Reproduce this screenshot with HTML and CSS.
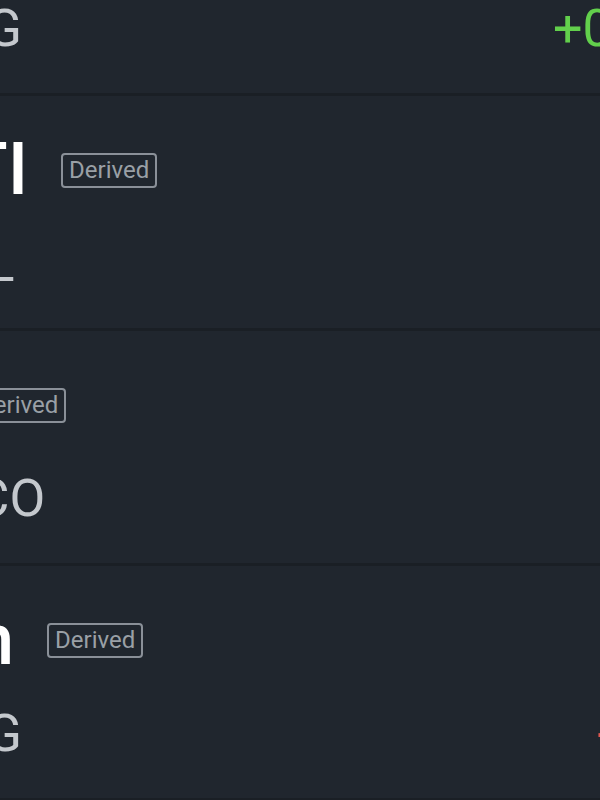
FILE: index.html
```html
<!DOCTYPE html>
<html lang="en">
<head>
<meta charset="utf-8">
<title>Watchlist</title>
<link rel="stylesheet" href="styles.css">
</head>
<body>
<ul class="list">
  <li class="row row--alibaba">
    <div class="row-head">
      <span class="title">Alibaba</span>
      <span class="badge">Derived</span>
    </div>
    <div class="row-foot">
      <span class="sub">9988.HKG</span>
      <span class="change change--up">+0.84%</span>
    </div>
  </li>
  <li class="row row--maruti">
    <div class="row-head">
      <span class="title">MARUTI</span>
      <span class="badge">Derived</span>
    </div>
    <div class="row-foot">
      <span class="sub">MSIL</span>
    </div>
  </li>
  <li class="row row--aramco">
    <div class="row-head">
      <span class="title">2222.SR</span>
      <span class="badge">Derived</span>
    </div>
    <div class="row-foot">
      <span class="sub">SAUDI ARAMCO</span>
    </div>
  </li>
  <li class="row row--meituan">
    <div class="row-head">
      <span class="title">Meituan</span>
      <span class="badge">Derived</span>
    </div>
    <div class="row-foot">
      <span class="sub">3690.HKG</span>
      <span class="change change--down">-0.5%</span>
    </div>
  </li>
</ul>
</body>
</html>
```

FILE: styles.css
```css
html, body {
  margin: 0;
  padding: 0;
  overflow: hidden;
  height: 100%;
}

body {
  background: #20262e;
  font-family: Roboto, "Noto Sans", "Liberation Sans", sans-serif;
}

.list {
  list-style: none;
  margin: -139px 0 0 0;
  padding: 0;
  width: 722px;
}

.row {
  box-sizing: border-box;
  height: 235px;
  padding: 38px 0 38px 0;
  border-bottom: 3px solid #1a1f25;
  display: flex;
  flex-direction: column;
  gap: 32px;
}

.row--alibaba { --title-shift: -230px; --sub-shift: -213px; }
.row--maruti  { --title-shift: -240px; --sub-shift: -103.9px; }
.row--aramco  { --title-shift: -335.5px; --sub-shift: -329px; }
.row--meituan { --title-shift: -248.7px; --sub-shift: -213px; }

.row-head {
  display: flex;
  align-items: center;
  height: 72px;
}

.title {
  margin-left: var(--title-shift);
  font-size: 72px;
  line-height: 72px;
  font-weight: 500;
  color: #ffffff;
  white-space: nowrap;
}

.badge {
  margin-left: 33px;
  padding: 0 6px;
  border: 2px solid #8a9098;
  border-radius: 4px;
  font-size: 24px;
  line-height: 31px;
  color: #9aa0a6;
  white-space: nowrap;
}

.row-foot {
  display: flex;
  align-items: baseline;
  height: 52px;
}

.sub {
  margin-left: var(--sub-shift);
  font-size: 52px;
  line-height: 52px;
  color: #c4c8cd;
  white-space: nowrap;
}

.change {
  margin-left: auto;
  font-size: 52px;
  line-height: 52px;
  white-space: nowrap;
}

.change--up { color: #62d04c; }
.change--down { color: #e0574f; }
```
